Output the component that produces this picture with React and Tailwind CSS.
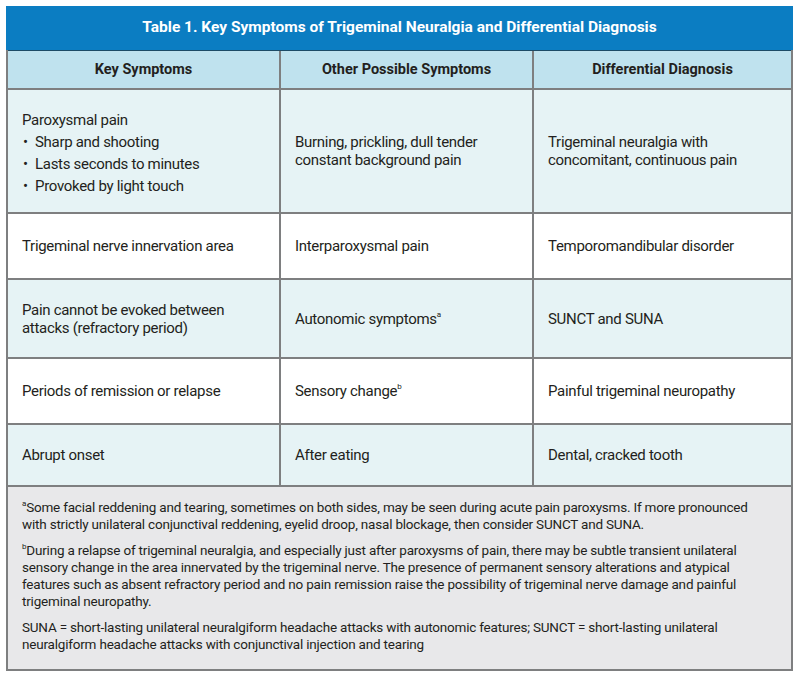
import React from 'react';

function Sup({ children }) {
  return <span className="inline-block align-top text-[8px] leading-[10px]">{children}</span>;
}

const rows = [
  {
    h: 'h-[122px]',
    light: true,
    a: (
      <div className="pt-[3px]">
        <p>Paroxysmal pain</p>
        <ul className="mt-[4px] space-y-[4px]">
          <li className="flex"><span className="w-[13px] shrink-0 pl-[1px]">•</span>Sharp and shooting</li>
          <li className="flex"><span className="w-[13px] shrink-0 pl-[1px]">•</span>Lasts seconds to minutes</li>
          <li className="flex"><span className="w-[13px] shrink-0 pl-[1px]">•</span>Provoked by light touch</li>
        </ul>
      </div>
    ),
    b: <p>Burning, prickling, dull tender<br />constant background pain</p>,
    c: <p>Trigeminal neuralgia with<br />concomitant, continuous pain</p>,
  },
  {
    h: 'h-[64px]',
    a: 'Trigeminal nerve innervation area',
    b: 'Interparoxysmal pain',
    c: 'Temporomandibular disorder',
  },
  {
    h: 'h-[77px]',
    light: true,
    a: <p>Pain cannot be evoked between<br />attacks (refractory period)</p>,
    b: <p>Autonomic symptoms<Sup>a</Sup></p>,
    c: 'SUNCT and SUNA',
  },
  {
    h: 'h-[64px]',
    a: 'Periods of remission or relapse',
    b: <p>Sensory change<Sup>b</Sup></p>,
    c: 'Painful trigeminal neuropathy',
  },
  {
    h: 'h-[60px]',
    light: true,
    a: 'Abrupt onset',
    b: 'After eating',
    c: 'Dental, cracked tooth',
  },
];

function Cell({ children, light, h }) {
  return (
    <div className={`${h} flex items-center px-[14px] ${light ? 'bg-[#e6f3f5]' : 'bg-white'}`}>
      <div>{children}</div>
    </div>
  );
}

export default function App() {
  return (
    <div className="min-h-[677px] bg-white p-[6px] text-[#231f20]" style={{ fontFamily: 'Roboto, "Liberation Sans", sans-serif' }}>
      <div className="w-[787px] border-x-2 border-b-2 border-[#7e7f80] bg-[#7e7f80]">
        <div className="h-[44px] bg-[#0b7dc2] flex items-center justify-center text-white font-bold text-[15.5px] -mx-[2px]">
          Table 1. Key Symptoms of Trigeminal Neuralgia and Differential Diagnosis
        </div>
        <div className="h-[1px] bg-[#1d4b66]" />
        <div className="grid grid-cols-[271px_251px_257px] gap-[2px] text-[15px] leading-[18px] tracking-[-0.3px]">
          {['Key Symptoms', 'Other Possible Symptoms', 'Differential Diagnosis'].map((t) => (
            <div key={t} className="h-[37px] bg-[#bfe2ee] flex items-center justify-center font-bold text-[14.5px] tracking-normal">
              {t}
            </div>
          ))}
          {rows.map((r, i) => (
            <React.Fragment key={i}>
              <Cell light={r.light} h={r.h}>{r.a}</Cell>
              <Cell light={r.light} h={r.h}>{r.b}</Cell>
              <Cell light={r.light} h={r.h}>{r.c}</Cell>
            </React.Fragment>
          ))}
        </div>
        <div className="mt-[2px] h-[182px] bg-[#e8e8ea] pl-[14px] pr-[26px] pt-[12px] text-[13.5px] leading-[17px] tracking-[-0.2px] space-y-[9px]">
          <p>
            <Sup>a</Sup>Some facial reddening and tearing, sometimes on both sides, may be seen during acute pain paroxysms. If more pronounced with strictly unilateral conjunctival reddening, eyelid droop, nasal blockage, then consider SUNCT and SUNA.
          </p>
          <p>
            <Sup>b</Sup>During a relapse of trigeminal neuralgia, and especially just after paroxysms of pain, there may be subtle transient unilateral sensory change in the area innervated by the trigeminal nerve. The presence of permanent sensory alterations and atypical features such as absent refractory period and no pain remission raise the possibility of trigeminal nerve damage and painful trigeminal neuropathy.
          </p>
          <p>
            SUNA = short-lasting unilateral neuralgiform headache attacks with autonomic features; SUNCT = short-lasting unilateral neuralgiform headache attacks with conjunctival injection and tearing
          </p>
        </div>
      </div>
    </div>
  );
}
